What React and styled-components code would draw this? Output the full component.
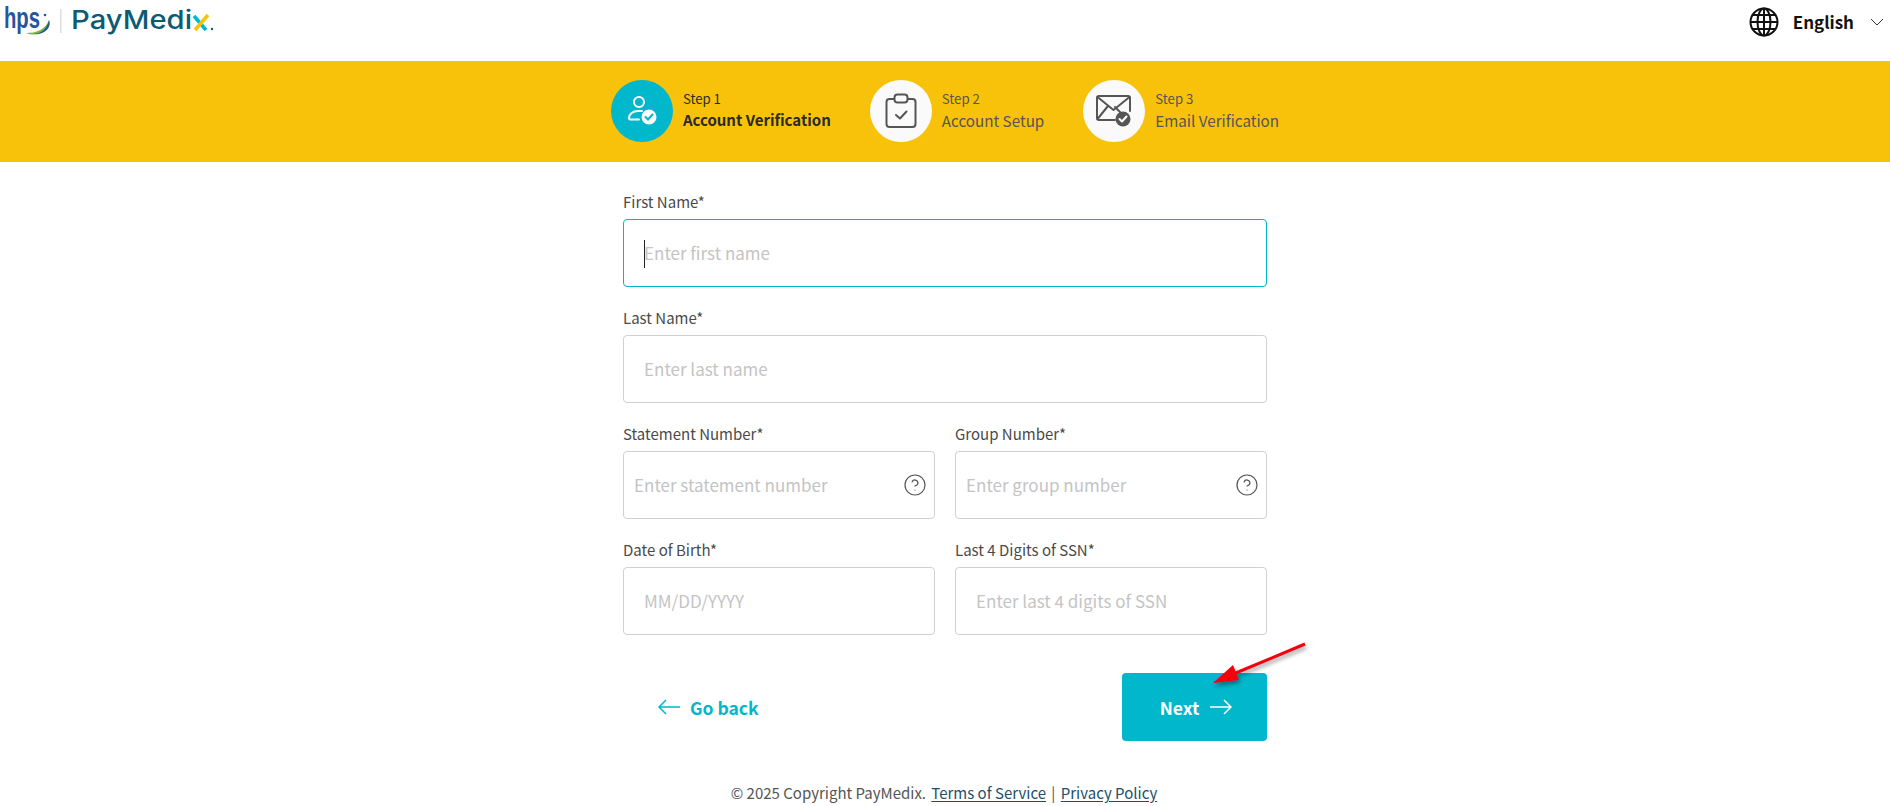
import React from "react";
import styled, { createGlobalStyle } from "styled-components";
import { CircleHelp } from "lucide-react";

const FONT = `"Noto Sans CJK SC", "Source Sans Pro", "Noto Sans", sans-serif`;
const TEAL = "#00b7cb";

const GlobalStyle = createGlobalStyle`
  html, body {
    margin: 0;
    padding: 0;
    background: #fff;
    font-family: ${FONT};
  }
  * {
    box-sizing: border-box;
  }
`;

const Page = styled.div`
  position: relative;
  width: 100%;
  height: 806px;
  overflow: hidden;
`;

const Header = styled.header`
  height: 61px;
  display: flex;
  align-items: flex-start;
  justify-content: space-between;
  padding: 0 6px 0 0;
`;

const Logo = styled.div`
  display: flex;
  align-items: flex-start;
`;

const LanguagePicker = styled.div`
  display: flex;
  align-items: center;
  gap: 14px;
  margin-top: 7px;
  font-size: 17px;
  font-weight: 700;
  line-height: 30px;
  color: #111;
`;

const Chevron = styled.svg`
  margin-left: 2px;
`;

const StepBar = styled.nav`
  height: 101px;
  padding-top: 19px;
  background: #f9c20a;
  display: flex;
  justify-content: center;
  align-items: flex-start;
  gap: 39px;
`;

const Step = styled.div`
  display: flex;
  align-items: center;
  gap: 10px;
`;

const StepCircle = styled.div`
  width: 62px;
  height: 62px;
  border-radius: 50%;
  display: flex;
  align-items: center;
  justify-content: center;
  background: ${(props) => (props.$active ? TEAL : "#fafafa")};
`;

const StepText = styled.div`
  display: flex;
  flex-direction: column;
  padding-bottom: 2px;
  color: ${(props) => (props.$active ? "#2a2a2a" : "#555")};
`;

const StepNumber = styled.span`
  font-size: 13.2px;
  line-height: 20px;
`;

const StepTitle = styled.span`
  font-size: ${(props) => (props.$active ? "15px" : "15.2px")};
  line-height: 22px;
  font-weight: ${(props) => (props.$active ? 700 : 400)};
`;

const Form = styled.form`
  width: 644px;
  margin: 0 auto;
  padding-top: 29px;
  display: flex;
  flex-direction: column;
  gap: 20px;
`;

const Row = styled.div`
  display: grid;
  grid-template-columns: 1fr 1fr;
  gap: 20px;
`;

const Field = styled.div`
  display: flex;
  flex-direction: column;
`;

const Label = styled.label`
  font-size: 15px;
  line-height: 22px;
  margin-bottom: 6px;
  color: #4a4a4a;
`;

const InputBox = styled.div`
  position: relative;
  height: 68px;
  display: flex;
  align-items: center;
  padding: ${(props) => (props.$help ? "0 7px 0 10px" : "0 20px")};
  border: 1px solid ${(props) => (props.$focused ? TEAL : "#d0d0d0")};
  border-radius: 4px;
  background: #fff;
  color: #555;
`;

const Input = styled.input`
  flex: 1;
  min-width: 0;
  border: 0;
  outline: 0;
  padding: 0 0 2px;
  background: transparent;
  font-family: ${FONT};
  font-size: 17px;
  color: #333;

  &::placeholder {
    color: #c4c4c4;
    opacity: 1;
  }
`;

const Caret = styled.span`
  position: absolute;
  left: 20px;
  top: 20px;
  width: 1px;
  height: 28px;
  background: #222;
`;

const Actions = styled.div`
  margin-top: 18px;
  display: flex;
  align-items: center;
  justify-content: space-between;
  padding-left: 35px;
`;

const BackLink = styled.a`
  display: flex;
  align-items: center;
  gap: 10px;
  font-size: 17.5px;
  font-weight: 700;
  color: ${TEAL};
`;

const NextButton = styled.button`
  width: 145px;
  height: 68px;
  padding: 0 0 0 3px;
  display: flex;
  align-items: center;
  justify-content: center;
  gap: 11px;
  border: 0;
  border-radius: 4px;
  background: ${TEAL};
  color: #fff;
  font-family: ${FONT};
  font-size: 17.5px;
  font-weight: 700;
`;

const Footer = styled.footer`
  margin-top: 40px;
  text-align: center;
  font-size: 15px;
  line-height: 24px;
  color: #555;
`;

const FooterLink = styled.a`
  color: #1c4f6b;
  text-decoration: underline;
  text-underline-offset: 2px;
  margin: 0 ${(props) => props.$gap || 0}px;
`;

const Annotation = styled.svg`
  position: absolute;
  left: 1200px;
  top: 630px;
  pointer-events: none;
`;

const PayMedixLogo = () => (
  <svg width="220" height="42" viewBox="0 0 220 42">
    <text x="4" y="28" fontFamily="Liberation Sans" fontWeight="700" fontSize="29" fill="#28549c" textLength="36" lengthAdjust="spacingAndGlyphs">
      hps
    </text>
    <path d="M26 33c10 0 19-3 23-13 3 10-9 18-23 13z" fill="#7fb548" />
    <path d="M34 34c8-1 13-5 15-14 3 7-4 15-15 14z" fill="#28549c" />
    <circle cx="45" cy="15" r="1.3" fill="#28549c" />
    <rect x="60" y="9" width="1.5" height="24" fill="#ddd" />
    <text x="71" y="29" fontFamily="Inter, Lato, sans-serif" fontWeight="500" fontSize="26" fill="#0b5c73" textLength="121" lengthAdjust="spacingAndGlyphs">
      PayMedi
    </text>
    <path d="M194 16l12 14" stroke="#00b7cb" strokeWidth="3.5" />
    <path d="M208 15l-13 15" stroke="#f9c20a" strokeWidth="3.5" />
    <circle cx="212" cy="29" r="1.2" fill="#0b5c73" />
  </svg>
);

const GlobeIcon = () => (
  <svg width="30" height="30" viewBox="0 0 30 30" fill="none" stroke="#111" strokeWidth="2">
    <circle cx="15" cy="15" r="13.5" />
    <ellipse cx="15" cy="15" rx="6.5" ry="13.5" />
    <path d="M15 1.5v27M1.5 15h27M3.5 8h23M3.5 22h23" />
  </svg>
);

const UserCheckIcon = () => (
  <svg width="32" height="32" viewBox="0 0 32 32" fill="none" stroke="#fff" strokeWidth="2" strokeLinecap="round">
    <circle cx="13" cy="7" r="5" />
    <path d="M16 16h-4c-5 0-9 3-9 7 0 1 .6 1.5 1.5 1.5H13" />
    <circle cx="23" cy="22" r="7.5" fill="#fff" stroke="none" />
    <path d="M19.5 22l2.5 2.5 4.5-5" stroke={TEAL} />
  </svg>
);

const ClipboardIcon = () => (
  <svg width="32" height="36" viewBox="0 0 32 36" fill="none" stroke="#555" strokeWidth="2" strokeLinecap="round" strokeLinejoin="round">
    <path d="M9 6H4.5C2.5 6 1.5 7 1.5 9v22c0 2 1 3 3 3h23c2 0 3-1 3-3V9c0-2-1-3-3-3H23" />
    <rect x="9.5" y="1.5" width="13" height="8" rx="3" />
    <path d="M11 22l4 3.5 6.5-7" />
  </svg>
);

const MailCheckIcon = () => (
  <svg width="36" height="32" viewBox="0 0 36 32" fill="none" stroke="#555" strokeWidth="2" strokeLinecap="round" strokeLinejoin="round">
    <path d="M19 25H3c-1.200 0-2-.8-2-2V3c0-1.200.8-2 2-2h29c1.200 0 2 .8 2 2v13" />
    <path d="M1.5 2L17.5 15 33.5 2M1.5 24L12 11M19 12l5 5" />
    <circle cx="27" cy="24" r="7.5" fill="#555" stroke="none" />
    <path d="M23.5 24l2.5 2.5 4.5-5" stroke="#fff" />
  </svg>
);

const LongArrow = ({ flip, color }) => (
  <svg width="22" height="16" viewBox="0 0 22 16" fill="none" stroke={color} strokeWidth="1.5" style={flip ? { transform: "scaleX(-1)" } : undefined}>
    <path d="M0 8h21M14 1l7 7-7 7" />
  </svg>
);

const steps = [
  { number: "Step 1", title: "Account Verification", icon: <UserCheckIcon />, active: true },
  { number: "Step 2", title: "Account Setup", icon: <ClipboardIcon /> },
  { number: "Step 3", title: "Email Verification", icon: <MailCheckIcon /> },
];

const TextField = ({ label, placeholder, help, focused }) => (
  <Field>
    <Label>{label}</Label>
    <InputBox $help={help} $focused={focused}>
      {focused && <Caret />}
      <Input placeholder={placeholder} />
      {help && <CircleHelp size={24} strokeWidth={1.2} />}
    </InputBox>
  </Field>
);

const App = () => {
  return (
    <Page>
      <GlobalStyle />
      <Header>
        <Logo>
          <PayMedixLogo />
        </Logo>
        <LanguagePicker>
          <GlobeIcon />
          English
          <Chevron width="14" height="8" viewBox="0 0 14 8" fill="none" stroke="#333" strokeWidth="1">
            <path d="M1 1l6 6 6-6" />
          </Chevron>
        </LanguagePicker>
      </Header>

      <StepBar>
        {steps.map((step) => (
          <Step key={step.number}>
            <StepCircle $active={step.active}>{step.icon}</StepCircle>
            <StepText $active={step.active}>
              <StepNumber>{step.number}</StepNumber>
              <StepTitle $active={step.active}>{step.title}</StepTitle>
            </StepText>
          </Step>
        ))}
      </StepBar>

      <Form>
        <TextField label="First Name*" placeholder="Enter first name" focused />
        <TextField label="Last Name*" placeholder="Enter last name" />
        <Row>
          <TextField label="Statement Number*" placeholder="Enter statement number" help />
          <TextField label="Group Number*" placeholder="Enter group number" help />
        </Row>
        <Row>
          <TextField label="Date of Birth*" placeholder="MM/DD/YYYY" />
          <TextField label="Last 4 Digits of SSN*" placeholder="Enter last 4 digits of SSN" />
        </Row>
        <Actions>
          <BackLink>
            <LongArrow flip color={TEAL} />
            Go back
          </BackLink>
          <NextButton type="button">
            Next
            <LongArrow color="#fff" />
          </NextButton>
        </Actions>
      </Form>

      <Footer>
        © 2025 Copyright PayMedix. <FooterLink $gap={2}>Terms of Service</FooterLink> | <FooterLink $gap={2}>Privacy Policy</FooterLink>
      </Footer>

      <Annotation width="120" height="70" viewBox="0 0 120 70">
        <defs>
          <filter id="arrowShadow" x="-20%" y="-20%" width="150%" height="170%">
            <feDropShadow dx="1" dy="3" stdDeviation="2" floodColor="#000" floodOpacity="0.4" />
          </filter>
        </defs>
        <g filter="url(#arrowShadow)">
          <path d="M105 14L31 45" stroke="#f5000f" strokeWidth="3" />
          <path d="M13 53L33 35 39 50z" fill="#f5000f" />
        </g>
      </Annotation>
    </Page>
  );
};

export default App;
